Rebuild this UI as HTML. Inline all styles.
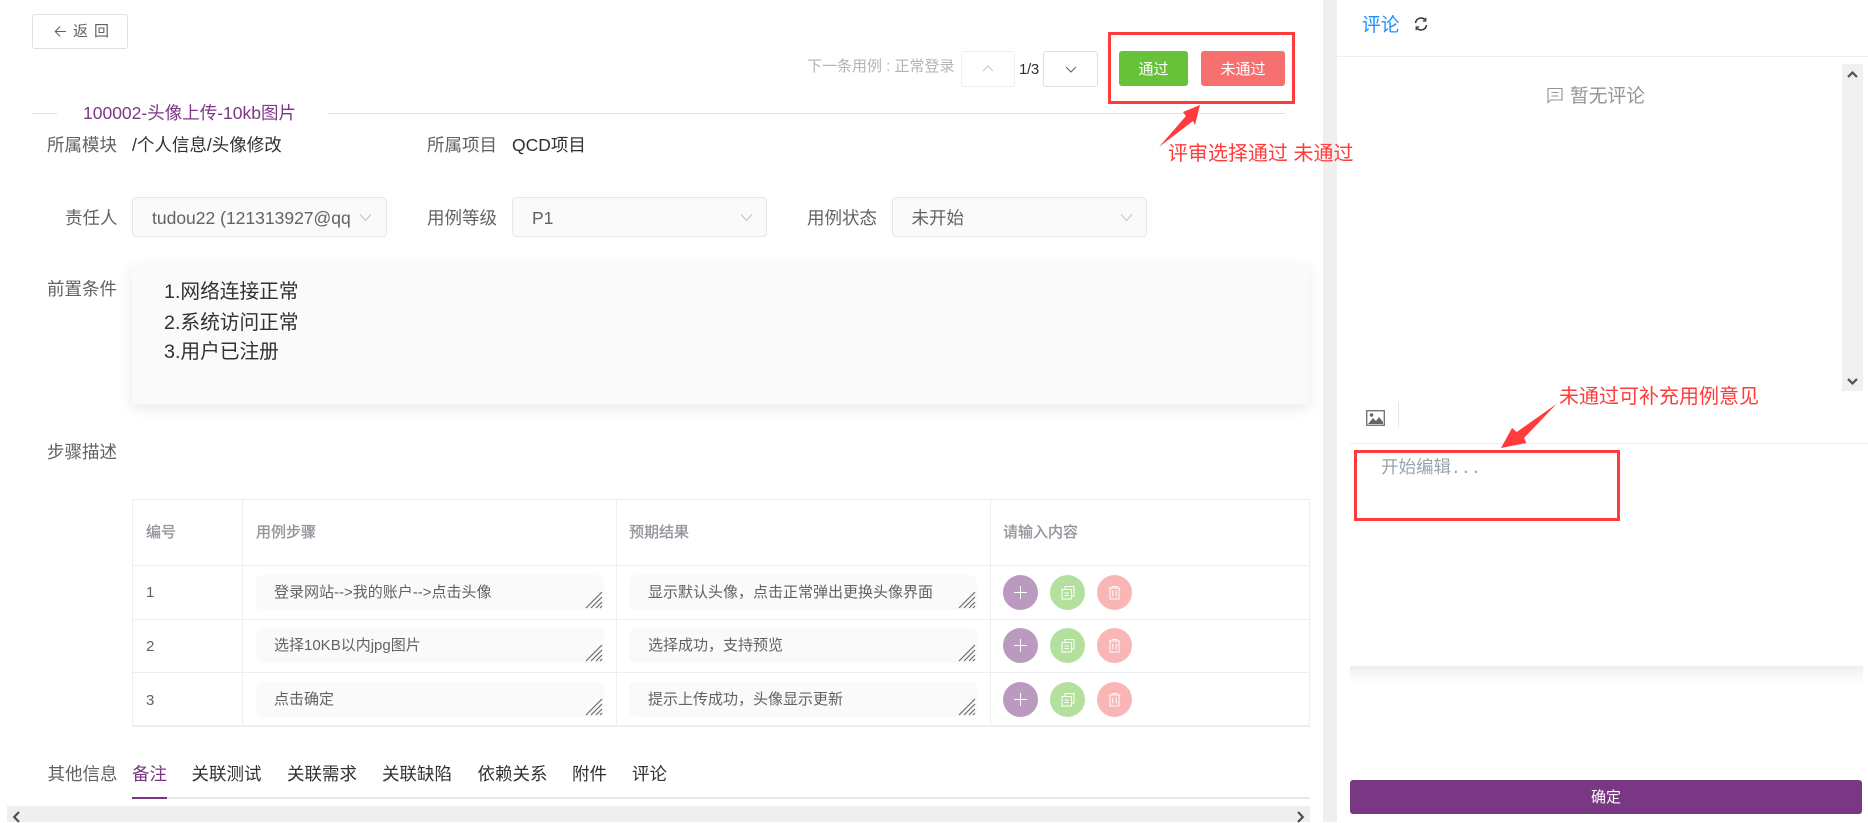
<!DOCTYPE html>
<html lang="zh-CN">
<head>
<meta charset="utf-8">
<title>用例评审</title>
<style>
html,body{margin:0;padding:0;background:#fff}
body{position:relative;width:1868px;height:822px;overflow:hidden;font-family:"Liberation Sans","Noto Sans CJK SC",sans-serif;color:#606266}
.a{position:absolute;box-sizing:border-box}
.t{position:absolute;white-space:nowrap;line-height:24px;height:24px;font-size:17.5px}
.lab{color:#606266}
.val{color:#303133}
.sel{position:absolute;box-sizing:border-box;height:40px;top:197px;background:#fafafa;border:1px solid #e4e7ed;border-radius:4px}
.btn{position:absolute;box-sizing:border-box;border-radius:3px;color:#fff;font-size:15px;text-align:center}
.th{position:absolute;white-space:nowrap;font-size:15px;line-height:20px;top:523px;color:#93969c;-webkit-text-stroke:.35px #93969c}
.ta{position:absolute;width:348px;height:35px;background:#fafafa;border-radius:6px}
.tt{position:absolute;white-space:nowrap;font-size:15px;line-height:20px;color:#606266}
.hl{position:absolute;background:#ebeef5;height:1px;left:132px;width:1178px}
.vl{position:absolute;background:#ebeef5;width:1px;top:499px;height:227px}
.c{position:absolute;width:35px;height:35px;border-radius:50%}
svg{position:absolute;overflow:visible;display:block}
.tab{position:absolute;top:762px;white-space:nowrap;font-size:17.5px;line-height:24px;color:#303133}
.red{color:#ff3b3b;font-size:20px}
</style>
</head>
<body>

<!-- back -->
<div class="a" style="left:32px;top:14px;width:96px;height:35px;border:1px solid #dcdfe6;border-radius:3px"></div>
<svg style="left:54px;top:25px" width="13" height="13" viewBox="0 0 13 13" fill="none" stroke="#606266" stroke-width="1"><path d="M12 6.500H1.500M6.200 1.500L1.200 6.500l5 5"/></svg>
<div class="t" style="left:73px;top:20px;font-size:15px;letter-spacing:6px">返回</div>

<!-- title -->
<div class="a" style="left:32px;top:113px;width:25px;height:1px;background:#dcdfe6"></div>
<div class="a" style="left:328px;top:113px;width:957px;height:1px;background:#dcdfe6"></div>
<div class="t" style="left:83px;top:101px;color:#7b3784">100002-头像上传-10kb图片</div>

<!-- next case -->
<div class="t" style="left:807px;top:55px;font-size:15px;color:#b4b4b4">下一条用例 : 正常登录</div>
<div class="a" style="left:961px;top:51px;width:54px;height:36px;border:1px solid #ebeef5;border-radius:3px"></div>
<svg style="left:982px;top:64px" width="12" height="9" viewBox="0 0 12 9" fill="none" stroke="#c0c4cc" stroke-width="1"><path d="M1 7l5-5 5 5"/></svg>
<div class="t" style="left:1019px;top:58px;font-size:15px;color:#303133;letter-spacing:-.3px">1/3</div>
<div class="a" style="left:1043px;top:51px;width:55px;height:36px;border:1px solid #dcdfe6;border-radius:3px"></div>
<svg style="left:1065px;top:65px" width="12" height="9" viewBox="0 0 12 9" fill="none" stroke="#606266" stroke-width="1"><path d="M1 2l5 5 5-5"/></svg>
<div class="btn" style="left:1119px;top:51px;width:69px;height:35px;line-height:37px;background:#67c23a">通过</div>
<div class="btn" style="left:1201px;top:51px;width:84px;height:35px;line-height:37px;background:#f67070">未通过</div>

<!-- row 1 -->
<div class="t lab" style="left:47px;top:133px">所属模块</div>
<div class="t val" style="left:132px;top:133px">/个人信息/头像修改</div>
<div class="t lab" style="left:427px;top:133px">所属项目</div>
<div class="t val" style="left:512px;top:133px">QCD项目</div>

<!-- row 2 -->
<div class="t lab" style="left:65px;top:206px">责任人</div>
<div class="sel" style="left:132px;width:255px"></div>
<div class="t" style="left:152px;top:206px">tudou22 (121313927@qq</div>
<svg style="left:359px;top:213px" width="13" height="9" viewBox="0 0 13 9" fill="none" stroke="#c0c4cc" stroke-width="1"><path d="M1 1.500l5.500 6 5.500-6"/></svg>
<div class="t lab" style="left:427px;top:206px">用例等级</div>
<div class="sel" style="left:512px;width:255px"></div>
<div class="t" style="left:532px;top:206px">P1</div>
<svg style="left:740px;top:213px" width="13" height="9" viewBox="0 0 13 9" fill="none" stroke="#c0c4cc" stroke-width="1"><path d="M1 1.500l5.500 6 5.500-6"/></svg>
<div class="t lab" style="left:807px;top:206px">用例状态</div>
<div class="sel" style="left:892px;width:255px"></div>
<div class="t" style="left:911.500px;top:206px">未开始</div>
<svg style="left:1120px;top:213px" width="13" height="9" viewBox="0 0 13 9" fill="none" stroke="#c0c4cc" stroke-width="1"><path d="M1 1.500l5.500 6 5.500-6"/></svg>

<!-- precondition -->
<div class="t lab" style="left:47px;top:277px">前置条件</div>
<div class="a" style="left:132px;top:265px;width:1177px;height:139px;background:#fafafa;box-shadow:0 4px 14px rgba(0,0,0,.09)"></div>
<div class="t val" style="left:164px;top:280px;font-size:19.700px">1.网络连接正常</div>
<div class="t val" style="left:164px;top:311px;font-size:19.700px">2.系统访问正常</div>
<div class="t val" style="left:164px;top:340px;font-size:19.700px">3.用户已注册</div>

<div class="t lab" style="left:47px;top:440px">步骤描述</div>

<!-- table -->
<div class="hl" style="top:499px"></div>
<div class="hl" style="top:565px"></div>
<div class="hl" style="top:619px"></div>
<div class="hl" style="top:672px"></div>
<div class="hl" style="top:725px;height:2px"></div>
<div class="vl" style="left:132px"></div>
<div class="vl" style="left:242px"></div>
<div class="vl" style="left:616px"></div>
<div class="vl" style="left:990px"></div>
<div class="vl" style="left:1309px"></div>

<div class="th" style="left:146px">编号</div>
<div class="th" style="left:256px">用例步骤</div>
<div class="th" style="left:629px">预期结果</div>
<div class="th" style="left:1003px">请输入内容</div>

<div class="tt" style="left:146px;top:583px">1</div>
<div class="tt" style="left:146px;top:637px">2</div>
<div class="tt" style="left:146px;top:691px">3</div>

<div class="ta" style="left:256px;top:575px"></div>
<div class="ta" style="left:256px;top:628px"></div>
<div class="ta" style="left:256px;top:682px"></div>
<div class="ta" style="left:629px;top:575px"></div>
<div class="ta" style="left:629px;top:628px"></div>
<div class="ta" style="left:629px;top:682px"></div>

<div class="tt" style="left:274px;top:583px">登录网站--&gt;我的账户--&gt;点击头像</div>
<div class="tt" style="left:274px;top:636px">选择10KB以内jpg图片</div>
<div class="tt" style="left:274px;top:690px">点击确定</div>
<div class="tt" style="left:648px;top:583px">显示默认头像，点击正常弹出更换头像界面</div>
<div class="tt" style="left:648px;top:636px">选择成功，支持预览</div>
<div class="tt" style="left:648px;top:690px">提示上传成功，头像显示更新</div>

<!-- resize grips -->
<svg style="left:585px;top:591px" width="18" height="18" viewBox="0 0 18 18" fill="none" stroke="#6a6a6a" stroke-width="1.200"><path d="M1 17L17 1M6 17L17 6M11 17l6-6M15 17l2-2"/></svg>
<svg style="left:585px;top:644px" width="18" height="18" viewBox="0 0 18 18" fill="none" stroke="#6a6a6a" stroke-width="1.200"><path d="M1 17L17 1M6 17L17 6M11 17l6-6M15 17l2-2"/></svg>
<svg style="left:585px;top:698px" width="18" height="18" viewBox="0 0 18 18" fill="none" stroke="#6a6a6a" stroke-width="1.200"><path d="M1 17L17 1M6 17L17 6M11 17l6-6M15 17l2-2"/></svg>
<svg style="left:958px;top:591px" width="18" height="18" viewBox="0 0 18 18" fill="none" stroke="#6a6a6a" stroke-width="1.200"><path d="M1 17L17 1M6 17L17 6M11 17l6-6M15 17l2-2"/></svg>
<svg style="left:958px;top:644px" width="18" height="18" viewBox="0 0 18 18" fill="none" stroke="#6a6a6a" stroke-width="1.200"><path d="M1 17L17 1M6 17L17 6M11 17l6-6M15 17l2-2"/></svg>
<svg style="left:958px;top:698px" width="18" height="18" viewBox="0 0 18 18" fill="none" stroke="#6a6a6a" stroke-width="1.200"><path d="M1 17L17 1M6 17L17 6M11 17l6-6M15 17l2-2"/></svg>

<!-- action buttons row 1 -->
<div class="c" style="left:1003px;top:575px;background:#bb9abf"></div>
<svg style="left:1003px;top:575px" width="35" height="35" viewBox="0 0 35 35" fill="none" stroke="#fff" stroke-width="1"><path d="M17.500 11v13M11 17.500h13"/></svg>
<div class="c" style="left:1050px;top:575px;background:#b3e19d"></div>
<svg style="left:1050px;top:575px" width="35" height="35" viewBox="0 0 35 35" fill="none" stroke="#fff" stroke-width="1"><path d="M12 14.500h9.500v9.500H12zM15 14.500V11.500h9v9.500h-2.500M14.500 18h4.500M14.500 20.500h4.500"/></svg>
<div class="c" style="left:1097px;top:575px;background:#fab6b6"></div>
<svg style="left:1097px;top:575px" width="35" height="35" viewBox="0 0 35 35" fill="none" stroke="#fff" stroke-width="1.100" opacity=".9"><path d="M11.500 13h12M15 13v-1.500h5V13M13 13v11h9V13M15.800 15.500v6M19.200 15.500v6"/></svg>
<!-- row 2 -->
<div class="c" style="left:1003px;top:628px;background:#bb9abf"></div>
<svg style="left:1003px;top:628px" width="35" height="35" viewBox="0 0 35 35" fill="none" stroke="#fff" stroke-width="1"><path d="M17.500 11v13M11 17.500h13"/></svg>
<div class="c" style="left:1050px;top:628px;background:#b3e19d"></div>
<svg style="left:1050px;top:628px" width="35" height="35" viewBox="0 0 35 35" fill="none" stroke="#fff" stroke-width="1"><path d="M12 14.500h9.500v9.500H12zM15 14.500V11.500h9v9.500h-2.500M14.500 18h4.500M14.500 20.500h4.500"/></svg>
<div class="c" style="left:1097px;top:628px;background:#fab6b6"></div>
<svg style="left:1097px;top:628px" width="35" height="35" viewBox="0 0 35 35" fill="none" stroke="#fff" stroke-width="1.100" opacity=".9"><path d="M11.500 13h12M15 13v-1.500h5V13M13 13v11h9V13M15.800 15.500v6M19.200 15.500v6"/></svg>
<!-- row 3 -->
<div class="c" style="left:1003px;top:682px;background:#bb9abf"></div>
<svg style="left:1003px;top:682px" width="35" height="35" viewBox="0 0 35 35" fill="none" stroke="#fff" stroke-width="1"><path d="M17.500 11v13M11 17.500h13"/></svg>
<div class="c" style="left:1050px;top:682px;background:#b3e19d"></div>
<svg style="left:1050px;top:682px" width="35" height="35" viewBox="0 0 35 35" fill="none" stroke="#fff" stroke-width="1"><path d="M12 14.500h9.500v9.500H12zM15 14.500V11.500h9v9.500h-2.500M14.500 18h4.500M14.500 20.500h4.500"/></svg>
<div class="c" style="left:1097px;top:682px;background:#fab6b6"></div>
<svg style="left:1097px;top:682px" width="35" height="35" viewBox="0 0 35 35" fill="none" stroke="#fff" stroke-width="1.100" opacity=".9"><path d="M11.500 13h12M15 13v-1.500h5V13M13 13v11h9V13M15.800 15.500v6M19.200 15.500v6"/></svg>

<!-- tabs -->
<div class="t lab" style="left:47.500px;top:762px">其他信息</div>
<div class="tab" style="left:132px;color:#7b3784">备注</div>
<div class="tab" style="left:191.500px">关联测试</div>
<div class="tab" style="left:287px">关联需求</div>
<div class="tab" style="left:382px">关联缺陷</div>
<div class="tab" style="left:477.500px">依赖关系</div>
<div class="tab" style="left:572px">附件</div>
<div class="tab" style="left:632px">评论</div>
<div class="a" style="left:132px;top:797px;width:1178px;height:2px;background:#e4e7ed"></div>
<div class="a" style="left:132px;top:797px;width:35px;height:2px;background:#7b3784"></div>

<!-- bottom scrollbar -->
<div class="a" style="left:7px;top:806px;width:1303px;height:16px;background:#efefef"></div>
<svg style="left:12px;top:811px" width="9" height="12" viewBox="0 0 9 12" fill="none" stroke="#505050" stroke-width="2.200"><path d="M7 1L2.200 6 7 11"/></svg>
<svg style="left:1296px;top:811px" width="9" height="12" viewBox="0 0 9 12" fill="none" stroke="#505050" stroke-width="2.200"><path d="M2 1l4.800 5L2 11"/></svg>

<!-- middle scrollbar band -->
<div class="a" style="left:1323px;top:0;width:14px;height:822px;background:#efefef"></div>

<!-- right panel -->
<div class="t" style="left:1362px;top:13px;font-size:18.750px;color:#1890ff">评论</div>
<svg style="left:1414px;top:17px" width="14" height="14" viewBox="0 0 14 14" fill="none" stroke="#303133" stroke-width="1.500"><path d="M1.500 6A5.500 5.500 0 0 1 11 2.800M12.500 8A5.500 5.500 0 0 1 3 11.200"/><path d="M11.800 .8V4H8.800M2.200 13.200V10H5.200" stroke-width="1.200"/></svg>
<div class="a" style="left:1337px;top:56px;width:531px;height:1px;background:#ebeef5"></div>

<!-- inner scrollbar -->
<div class="a" style="left:1842px;top:64px;width:21px;height:327px;background:#f0f0f0"></div>
<svg style="left:1847px;top:70px" width="11" height="8" viewBox="0 0 11 8" fill="none" stroke="#505050" stroke-width="2.200"><path d="M1 7l4.500-4.500L10 7"/></svg>
<svg style="left:1847px;top:378px" width="11" height="8" viewBox="0 0 11 8" fill="none" stroke="#505050" stroke-width="2.200"><path d="M1 1l4.500 4.500L10 1"/></svg>

<!-- empty -->
<svg style="left:1547px;top:87px" width="16" height="16" viewBox="0 0 16 16" fill="none" stroke="#8c939d" stroke-width="1.100"><path d="M1 15.500V1.500h14v11.500H3.500zM4.500 5.500h7M4.500 9h7"/></svg>
<div class="t" style="left:1570px;top:84px;font-size:18.750px;color:#909399">暂无评论</div>

<!-- editor -->
<div class="a" style="left:1350px;top:666px;width:513px;height:18px;background:linear-gradient(#eeeeee,#fbfbfb 70%,#fff)"></div>
<svg style="left:1366px;top:410px" width="19" height="16" viewBox="0 0 19 16"><rect x=".7" y=".7" width="17.600" height="14.600" fill="#fff" stroke="#777" stroke-width="1.400"/><path d="M2 14l5-6 3 3 3-4 4 5v2H2z" fill="#666"/><circle cx="5.500" cy="5" r="1.800" fill="#666"/></svg>
<div class="a" style="left:1398px;top:402px;width:1px;height:26px;background:#e6e6e6"></div>
<div class="a" style="left:1350px;top:443px;width:518px;height:1px;background:#eee"></div>
<div class="t" style="left:1381px;top:455px;color:#98a3ae">开始编辑<span style="letter-spacing:.4px;font-family:'Liberation Mono',monospace;font-size:16px;color:#7fa3c4">...</span></div>

<!-- confirm -->
<div class="btn" style="left:1350px;top:780px;width:512px;height:34px;line-height:36px;background:#7a3784">确定</div>

<!-- annotations -->
<div class="a" style="left:1108px;top:32px;width:187px;height:72px;border:3px solid #ff3b3b"></div>
<svg style="left:0;top:0" width="1868" height="822" viewBox="0 0 1868 822"><path d="M1200 105L1183 112 1186 116 1159 147 1193 121 1195 125z" fill="#ff3b3b"/><path d="M1501 448L1512 428 1516.700 432 1556.500 404 1524 438 1526.500 443z" fill="#ff3b3b"/></svg>
<div class="t red" style="left:1168px;top:142px">评审选择通过 未通过</div>
<div class="a" style="left:1354px;top:450px;width:266px;height:71px;border:3px solid #ff3b3b"></div>
<div class="t red" style="left:1559px;top:385px">未通过可补充用例意见</div>

</body>
</html>
